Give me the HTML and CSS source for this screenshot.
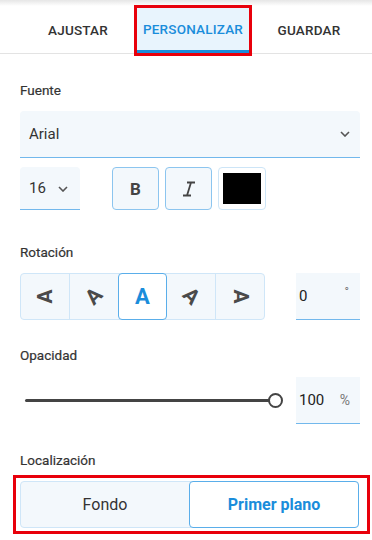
FILE: index.html
```html
<!DOCTYPE html>
<html lang="es">
<head>
<meta charset="utf-8">
<link rel="stylesheet" href="styles.css">
</head>
<body>
<div class="topshade"></div>
<nav class="tabs">
  <div class="tab">AJUSTAR</div>
  <div class="tab active">PERSONALIZAR</div>
  <div class="tab">GUARDAR</div>
</nav>
<main class="panel">
  <div class="label lbl-fuente">Fuente</div>
  <div class="select font-select">
    <span>Arial</span>
    <svg class="chev" width="10" height="6" viewBox="0 0 10 6"><polyline points="1,1 5,5 9,1" fill="none" stroke="#555" stroke-width="1.6"/></svg>
  </div>
  <div class="row style-row">
    <div class="select size-select">
      <span>16</span>
      <svg class="chev" width="10" height="6" viewBox="0 0 10 6"><polyline points="1,1 5,5 9,1" fill="none" stroke="#555" stroke-width="1.6"/></svg>
    </div>
    <div class="btn bold">B</div>
    <div class="btn italic">
      <svg width="14" height="16" viewBox="0 0 14 16"><path d="M5 1.5h8M1 14.5h8M9 1.5L5 14.5" fill="none" stroke="#444" stroke-width="1.8"/></svg>
    </div>
    <div class="btn swatch"><div class="swatch-fill"></div></div>
  </div>

  <div class="label lbl-rot">Rotación</div>
  <div class="row rot-row">
    <div class="rot-group">
      <div class="rot"><span class="ga r-90">A</span></div>
      <div class="rot"><span class="ga r-45">A</span></div>
      <div class="rot sel"><span class="ga r0">A</span></div>
      <div class="rot"><span class="ga r45">A</span></div>
      <div class="rot"><span class="ga r90">A</span></div>
    </div>
    <div class="numbox"><span class="num">0</span><span class="unit">°</span></div>
  </div>

  <div class="label lbl-op">Opacidad</div>
  <div class="row op-row">
    <div class="slider">
      <div class="track"></div>
      <div class="thumb"></div>
    </div>
    <div class="numbox"><span class="num">100</span><span class="unit pct">%</span></div>
  </div>

  <div class="label lbl-loc">Localización</div>
  <div class="mark">
    <div class="seg">
      <div class="seg-item">Fondo</div>
      <div class="seg-item on">Primer plano</div>
    </div>
  </div>
</main>
</body>
</html>
```

FILE: styles.css
```css
* { box-sizing: border-box; }
html, body { margin: 0; padding: 0; background: #fff; }
body {
  font-family: Roboto, "Liberation Sans", sans-serif;
  color: #333;
  width: 372px;
  height: 540px;
  overflow: hidden;
  position: relative;
}
.topshade {
  position: absolute;
  left: 0; top: 0; right: 0;
  height: 6px;
  background: linear-gradient(#e6e6e6, rgba(255,255,255,0));
  pointer-events: none;
}
.tabs {
  display: flex;
  gap: 4px;
  padding: 8px 0 0 22px;
  height: 54px;
  border-bottom: 1px solid #e3e3e3;
}
.tab {
  width: 112px;
  height: 45px;
  display: flex;
  align-items: center;
  justify-content: center;
  font-size: 13.5px;
  font-weight: 500;
  color: #333;
  letter-spacing: 0.2px;
  padding-bottom: 1px;
}
.tab.active {
  margin-left: -1px;
  color: #1a8ddb;
  background: #e8f4fd;
  border-bottom: 3px solid #1a8ddb;
  padding-bottom: 0;
  outline: 3px solid #e8000b;
  outline-offset: 0;
  position: relative;
  z-index: 2;
}
.panel {
  padding: 0 12px 0 20px;
  display: flex;
  flex-direction: column;
}
.label {
  font-size: 13.5px;
  font-weight: 400;
  line-height: 20px;
  color: #333;
  -webkit-text-stroke: 0.2px #333;
}
.lbl-fuente { margin-top: 26px; }
.lbl-rot { margin-top: 32px; }
.lbl-op { margin-top: 25px; }
.lbl-loc { margin-top: 26px; }

.select {
  background: #f3f8fc;
  border-bottom: 1.5px solid #72b8ec;
  border-radius: 4px 4px 0 0;
  display: flex;
  align-items: center;
  justify-content: space-between;
  font-size: 15px;
  color: #333;
}
.font-select {
  margin-top: 11px;
  height: 47px;
  padding: 0 10px 0 9px;
}
.chev { display: block; }
.row { display: flex; align-items: stretch; }
.style-row {
  margin-top: 9px;
  height: 43px;
}
.size-select {
  width: 60px;
  padding: 0 12px 0 9px;
}
.size-select .chev { margin-top: 1px; }
.btn {
  width: 47px;
  border: 1px solid #8cc5ef;
  border-radius: 4px;
  background: #f3f8fc;
  display: flex;
  align-items: center;
  justify-content: center;
}
.bold {
  margin-left: 32px;
  font-weight: 700;
  font-size: 17px;
  color: #444;
  padding-top: 1px;
}
.italic { margin-left: 6px; padding-top: 1px; }
.swatch {
  margin-left: 6px;
  width: 48px;
  border-color: #cde5f7;
  background: #fff;
}
.swatch-fill {
  width: 38px;
  height: 31px;
  background: #000;
}

.rot-row {
  margin-top: 11px;
  height: 47px;
  justify-content: space-between;
}
.rot-group {
  display: flex;
  width: 245px;
  border: 1px solid #cfe6f8;
  border-radius: 4px;
  background: #f3f8fc;
}
.rot {
  flex: 1;
  display: flex;
  align-items: center;
  justify-content: center;
  border-left: 1px solid #cfe6f8;
}
.rot:first-child { border-left: none; }
.rot.sel {
  background: #fff;
  border: 1px solid #5aaeea;
  border-radius: 4px;
  margin: -1px 0;
}
.rot.sel + .rot { border-left: none; }
.ga {
  display: inline-block;
  font-weight: 700;
  font-size: 21px;
  line-height: 1;
  color: #4a4a4a;
}
.r-90 { transform: rotate(-90deg); }
.r-45 { transform: rotate(-45deg); }
.r45 { transform: rotate(45deg); }
.r90 { transform: rotate(90deg); }
.r0 { color: #1a8ddb; font-size: 22px; }

.numbox {
  width: 64px;
  background: #f3f8fc;
  border-bottom: 1.5px solid #72b8ec;
  display: flex;
  align-items: center;
  justify-content: space-between;
  padding: 0 11px 0 3px;
  font-size: 15px;
  color: #222;
}
.unit { font-size: 12px; color: #777; margin-top: -8px; }
.unit.pct { font-size: 14px; margin-top: 0; margin-right: -1px; }

.op-row {
  margin-top: 12px;
  height: 47px;
  justify-content: space-between;
}
.slider {
  width: 264px;
  position: relative;
  display: flex;
  align-items: center;
  padding-left: 5px;
}
.track {
  height: 3px;
  width: 251px;
  background: #444;
  border-radius: 2px;
}
.thumb {
  position: absolute;
  left: 248px;
  top: 50%;
  width: 15px;
  height: 15px;
  margin-top: -8px;
  border: 2px solid #444;
  border-radius: 50%;
  background: #fff;
}

.mark {
  margin: 5px -10px 0 -7px;
  border: 3px solid #e8000b;
  padding: 3px 8px 3px 4px;
}
.seg {
  height: 47px;
  display: flex;
  border: 1px solid #cfe6f8;
  border-radius: 4px;
  background: #f3f8fc;
}
.seg-item {
  flex: 1;
  display: flex;
  align-items: center;
  justify-content: center;
  font-size: 16px;
  color: #333;
}
.seg-item.on {
  background: #fff;
  border: 1px solid #5aaeea;
  border-radius: 4px;
  margin: -1px -1px -1px 0;
  color: #1a8ddb;
  font-weight: 700;
}
```
